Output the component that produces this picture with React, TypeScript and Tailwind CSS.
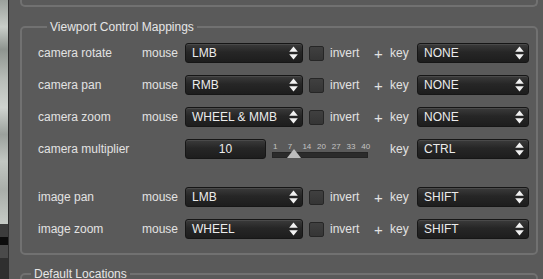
import React from 'react';

const font = { fontFamily: '"Liberation Sans", Arial, sans-serif' };

// Up/down arrows drawn at the right side of a combo box
const ComboArrows = () => (
  <svg width="9" height="14" viewBox="0 0 9 14" className="shrink-0">
    <path d="M4.5 0.5 L8.8 5.8 L0.2 5.8 Z" fill="#f2f2f2" />
    <path d="M4.5 13.5 L8.8 8.2 L0.2 8.2 Z" fill="#f2f2f2" />
  </svg>
);

const Combo = ({ value, width }: { value: string; width: string }) => (
  <div
    className={`${width} h-[20px] flex items-center justify-between pl-[6px] pr-[4px] rounded-[3px] border border-[#161616] bg-[linear-gradient(#3b3b3b,#262626_45%,#1d1d1d)] shadow-[inset_0_1px_0_#4a4a4a] text-[12px] text-[#ececec]`}
  >
    <span className="leading-none">{value}</span>
    <ComboArrows />
  </div>
);

const Checkbox = () => (
  <div className="w-[15px] h-[15px] rounded-[2px] border border-[#262626] bg-[linear-gradient(#404040,#353535)]" />
);

const ticks = ['1', '7', '14', '20', '27', '33', '40'];

const Slider = () => (
  <div className="w-[96px] ml-[6px] flex flex-col">
    <div className="relative h-[10px] text-[8px] leading-none text-[#c4c4c4]">
      {ticks.map((t, i) => (
        <span
          key={t}
          className="absolute top-[2px]"
          style={{ left: `${i * 14.7 + 1}px` }}
        >
          {t}
        </span>
      ))}
    </div>
    <div className="relative h-[6px] mt-[1px] bg-[#2b2b2b] border border-[#242424]">
      <div className="absolute left-[14px] top-[-4px] w-0 h-0 border-l-[7px] border-r-[7px] border-b-[9px] border-l-transparent border-r-transparent border-b-[#bdbdbd]" />
    </div>
  </div>
);

interface RowProps {
  label: string;
  mouse: string;
  keyValue: string;
}

const MappingRow = ({ label, mouse, keyValue }: RowProps) => (
  <div className="h-[32px] flex items-center">
    <div className="w-[104px] text-[12px] text-[#e2e2e2]">{label}</div>
    <div className="w-[43px] text-[12px] text-[#e2e2e2]">mouse</div>
    <Combo value={mouse} width="w-[118px]" />
    <div className="ml-[6px]">
      <Checkbox />
    </div>
    <div className="ml-[6px] w-[40px] text-[12px] text-[#e2e2e2]">invert</div>
    <div className="ml-[4px] w-[16px] text-[15px] text-[#e2e2e2] leading-none">+</div>
    <div className="w-[27px] text-[12px] text-[#e2e2e2]">key</div>
    <Combo value={keyValue} width="w-[112px]" />
  </div>
);

export default function App() {
  return (
    <div className="w-[543px] h-[279px] flex overflow-hidden bg-[#5a5a5a]" style={font}>
      {/* strip of the 3D view at the far left */}
      <div className="w-[8px] flex flex-col shrink-0">
        <div className="h-[224px] bg-[linear-gradient(#9aa09b,#c9cec9_12%,#8e948f_22%,#b7bcb7_35%,#d0d4d0_48%,#9ba19c_60%,#c2c7c2_72%,#a9aea9_85%,#c6cbc6)]" />
        <div className="h-[13px] bg-[#3c3c3c]" />
        <div className="h-[8px] bg-[#0c0c0c]" />
        <div className="h-[13px] bg-[#4a4a4a]" />
        <div className="flex-1 bg-[#2f2f2f]" />
      </div>
      <div className="w-[1px] bg-[#2e2e2e] shrink-0" />

      <div className="flex-1 pl-[11px] pr-[5px]">
        {/* bottom of the group box above */}
        <div className="h-[7px] border-x-2 border-b-2 border-[#717171] rounded-b-[5px]" />

        <fieldset className="mt-[13px] border-2 border-[#717171] rounded-[5px] pl-[16px] pt-[3px] pb-[8px]">
          <legend className="ml-[9px] px-[3px] text-[12px] leading-[14px] text-[#e6e6e6]">
            Viewport Control Mappings
          </legend>
          <MappingRow label="camera rotate" mouse="LMB" keyValue="NONE" />
          <MappingRow label="camera pan" mouse="RMB" keyValue="NONE" />
          <MappingRow label="camera zoom" mouse="WHEEL & MMB" keyValue="NONE" />
          <div className="h-[32px] flex items-center">
            <div className="w-[147px] text-[12px] text-[#e2e2e2]">camera multiplier</div>
            <div className="w-[81px] h-[20px] flex items-center justify-center rounded-[3px] border border-[#161616] bg-[linear-gradient(#3b3b3b,#262626_45%,#1d1d1d)] shadow-[inset_0_1px_0_#4a4a4a] text-[12px] text-[#ececec]">
              10
            </div>
            <Slider />
            <div className="ml-[22px] w-[27px] text-[12px] text-[#e2e2e2]">key</div>
            <Combo value="CTRL" width="w-[112px]" />
          </div>
          <div className="h-[16px]" />
          <MappingRow label="image pan" mouse="LMB" keyValue="SHIFT" />
          <MappingRow label="image zoom" mouse="WHEEL" keyValue="SHIFT" />
        </fieldset>

        <fieldset className="mt-[12px] border-2 border-[#717171] rounded-[5px] h-[40px]">
          <legend className="ml-[9px] px-[3px] text-[12px] leading-[14px] text-[#e6e6e6]">
            Default Locations
          </legend>
        </fieldset>
      </div>
    </div>
  );
}
